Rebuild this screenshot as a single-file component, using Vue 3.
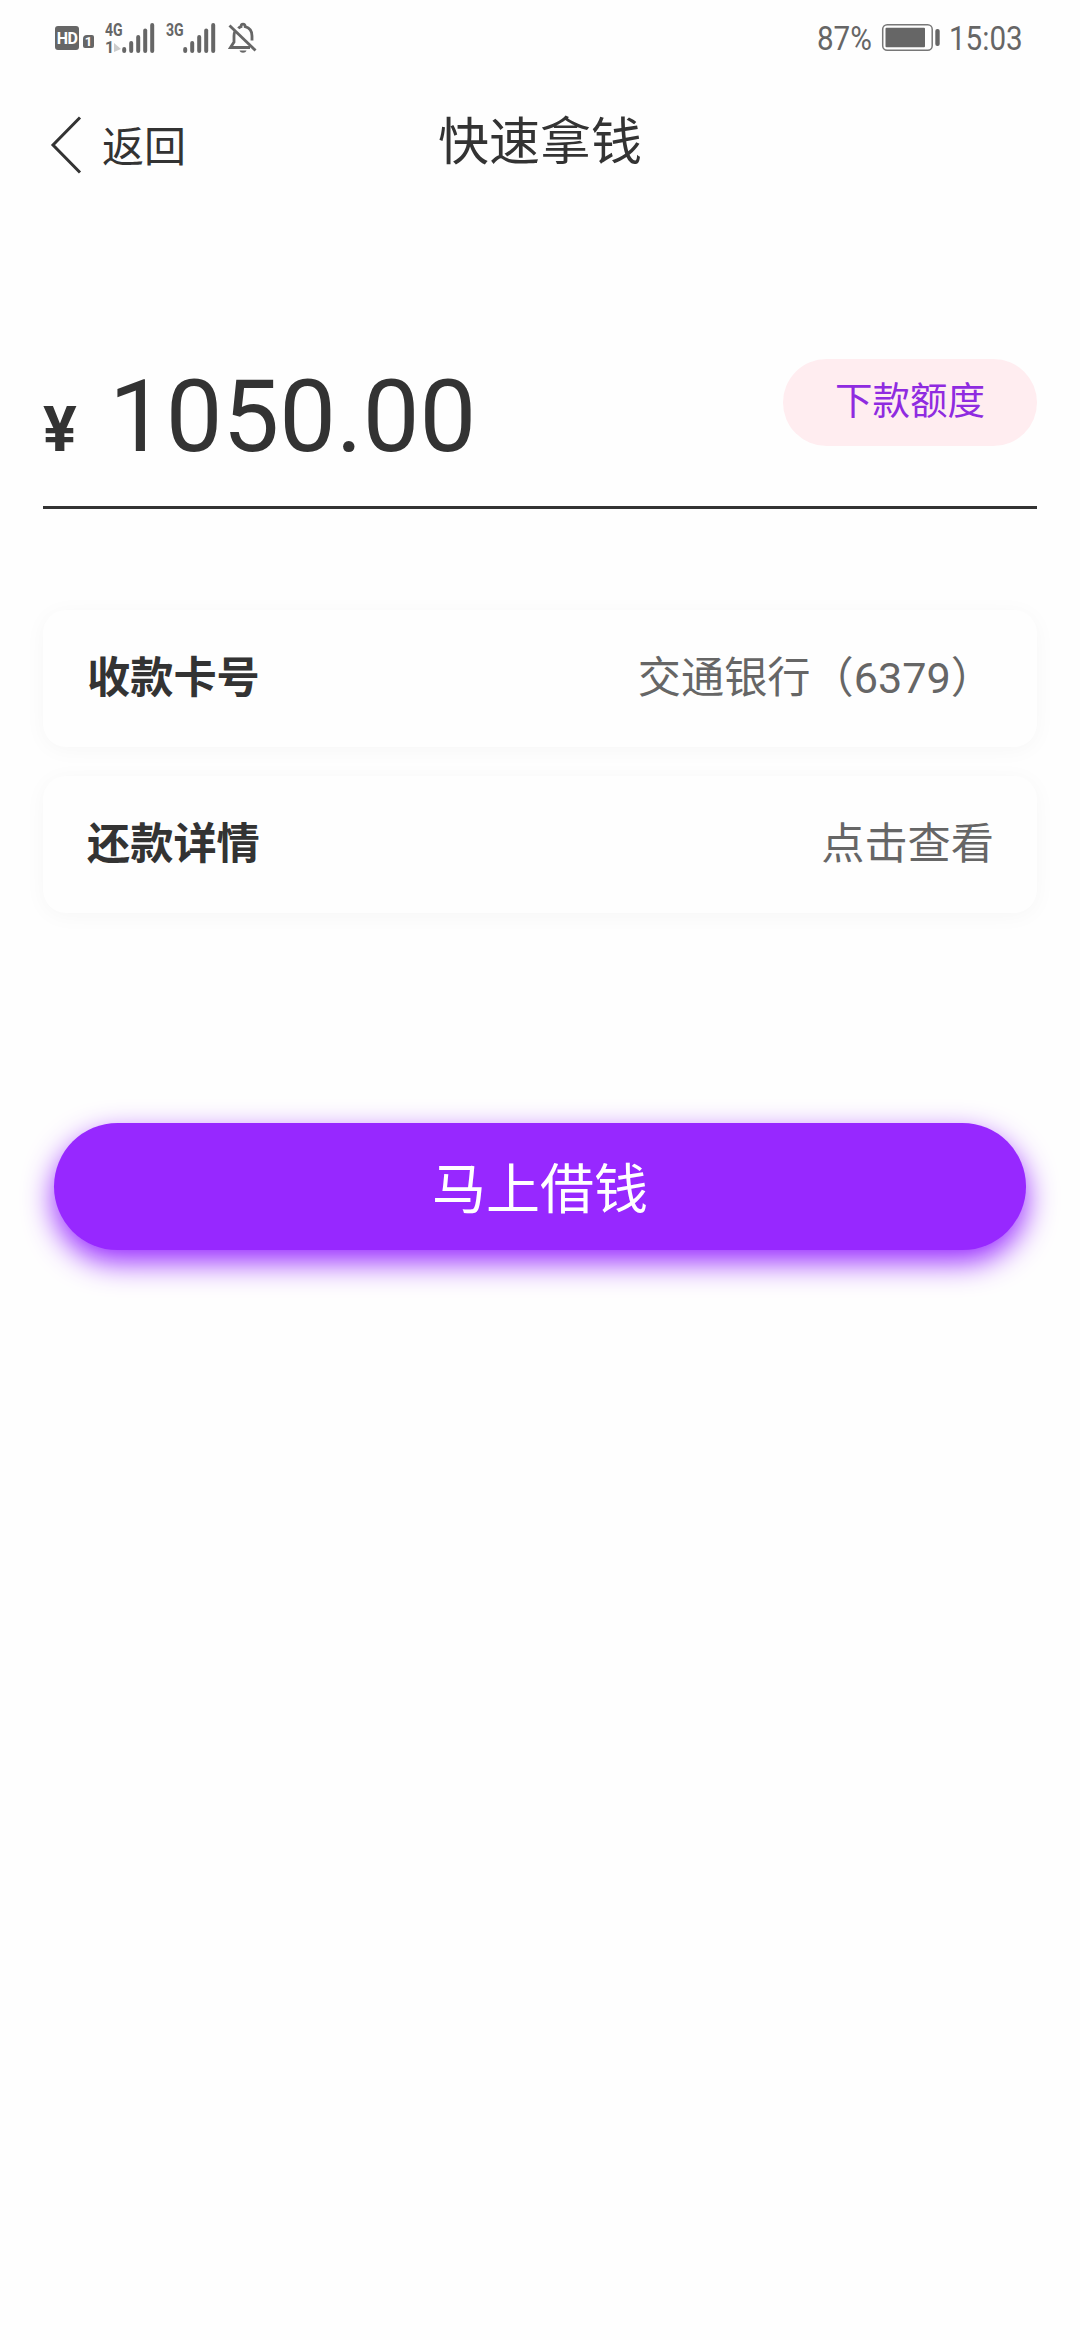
<template>
  <div class="page">
    <div class="status-bar">
      <div class="status-left">
        <span class="hd">HD</span>
        <span class="sim">1</span>
        <div class="network">
          <span class="network-type">4G</span>
          <span class="network-data">1<i class="data-arrow"></i></span>
        </div>
        <svg class="signal" viewBox="0 0 33 31">
          <path v-for="bar in bars" :key="bar.x" :d="`M${bar.x} ${bar.y}V29`" />
        </svg>
        <div class="network second">
          <span class="network-type">3G</span>
        </div>
        <svg class="signal" viewBox="0 0 33 31">
          <path v-for="bar in bars" :key="bar.x" :d="`M${bar.x} ${bar.y}V29`" />
        </svg>
        <svg class="bell" viewBox="0 0 30 32">
          <path class="line" d="M10.500 6.500C11 5.500 12 5 13 4.700C13 1.200 17 1.200 17.200 4.700C22 6 24 9.500 24 14V18.500" />
          <path class="line" d="M7 9.500C6 11 6 12 6 14V20L2.500 25.500H22" />
          <path class="line" d="M1.500 3.500L27.500 28.500" />
          <path class="clapper" d="M11.500 28.500H18.500C17.500 31.500 12.500 31.500 11.500 28.500Z" />
        </svg>
      </div>
      <div class="status-right">
        <span class="percent"><b>87%</b></span>
        <svg class="battery" viewBox="0 0 60 29">
          <rect class="shell" x="1.700" y="1.700" width="49.500" height="25.600" rx="4.500" />
          <rect x="4.500" y="4.800" width="39.500" height="19.400" rx="1" />
          <rect x="54.300" y="6" width="4.400" height="17" rx="2" />
        </svg>
        <span class="time"><b>15:03</b></span>
      </div>
    </div>

    <header class="nav">
      <button class="back" @click="goBack">
        <svg class="back-icon" viewBox="0 0 32 58">
          <path d="M30 1.500L3 29L30 56.500" />
        </svg>
        <span class="back-text">返回</span>
      </button>
      <h1 class="title">快速拿钱</h1>
    </header>

    <section class="amount">
      <div class="amount-value">
        <span class="currency">¥</span>
        <span class="number">{{ amount }}</span>
      </div>
      <span class="tag">下款额度</span>
    </section>

    <section class="cards">
      <div v-for="item in items" :key="item.label" class="card">
        <span class="label">{{ item.label }}</span>
        <span class="value">{{ item.value }}</span>
      </div>
    </section>

    <button class="submit">马上借钱</button>
  </div>
</template>

<script setup>
import { ref } from 'vue'

const amount = ref('1050.00')

const items = ref([
  { label: '收款卡号', value: '交通银行（6379）' },
  { label: '还款详情', value: '点击查看' }
])

const bars = [
  { x: 2.2, y: 27 },
  { x: 9.2, y: 21 },
  { x: 16.2, y: 15 },
  { x: 23.2, y: 8.5 },
  { x: 30.2, y: 3 }
]

const goBack = () => {
  window.history.back()
}
</script>

<style>
body {
  background: #fefefe;
}
</style>

<style scoped>
.page {
  width: 1080px;
  height: 2340px;
  overflow: hidden;
  background: #fefefe;
  color: #333;
  font-family: Roboto, "Noto Sans CJK SC", sans-serif;
}

button {
  border: none;
  padding: 0;
  background: none;
  font-family: inherit;
  cursor: pointer;
}

.status-bar {
  height: 75px;
  box-sizing: border-box;
  padding: 0 56px 0 55px;
  display: flex;
  justify-content: space-between;
  align-items: center;
  color: #666;
}

.status-left {
  display: flex;
  align-items: center;
}

.hd {
  width: 24px;
  height: 24px;
  border-radius: 3px;
  background: #666;
  color: #fff;
  font-size: 16px;
  font-weight: 700;
  line-height: 25px;
  letter-spacing: -0.5px;
  text-align: center;
}

.sim {
  width: 11px;
  height: 13px;
  margin: 7px 11px 0 4px;
  border-radius: 4px 2px 2px 2px;
  background: #666;
  color: #fff;
  font-size: 13px;
  font-weight: 700;
  line-height: 14px;
  text-align: center;
}

.network {
  width: 17px;
  height: 32px;
  display: flex;
  flex-direction: column;
  justify-content: space-between;
}

.network.second {
  margin-left: 11px;
}

.network-type {
  font-size: 19px;
  font-weight: 700;
  line-height: 15px;
  transform: scaleX(0.74);
  transform-origin: left;
}

.network-data {
  display: flex;
  align-items: center;
  font-size: 16px;
  font-weight: 700;
  line-height: 12px;
}

.data-arrow {
  flex: none;
  border-left: 7px solid #ccc;
  border-top: 6px solid transparent;
  border-bottom: 3px solid transparent;
}

.signal {
  width: 33px;
  height: 31px;
}

.signal path {
  stroke: #666;
  stroke-width: 4;
  stroke-linecap: round;
}

.bell {
  width: 30px;
  height: 32px;
  margin-left: 12px;
}

.bell .line {
  fill: none;
  stroke: #666;
  stroke-width: 2.8;
}

.bell .clapper {
  fill: #666;
}

.status-right {
  display: flex;
  align-items: center;
  font-size: 34px;
  line-height: 40px;
}

.status-right b {
  display: block;
  font-weight: 400;
  transform: scaleX(0.87);
  transform-origin: left;
}

.percent {
  width: 64px;
}

.battery {
  width: 60px;
  height: 29px;
  fill: #666;
}

.battery .shell {
  fill: none;
  stroke: #777;
  stroke-width: 1.5;
}

.time {
  width: 83px;
  padding-left: 8px;
  box-sizing: border-box;
}

.nav {
  height: 140px;
  display: grid;
  grid-template-columns: 1fr auto 1fr;
  align-items: center;
}

.back {
  display: flex;
  align-items: center;
  gap: 20px;
  padding-left: 50px;
  color: #333;
  font-size: 42px;
  line-height: 60px;
}

.back-icon {
  width: 32px;
  height: 58px;
  fill: none;
  stroke: #333;
  stroke-width: 3;
}

.back-text {
  padding-top: 5px;
}

.title {
  margin: 0 0 4px;
  font-size: 51px;
  font-weight: 400;
  line-height: 72px;
}

.amount {
  height: 147px;
  margin: 144px 43px 0;
  display: flex;
  justify-content: space-between;
  align-items: flex-start;
  border-bottom: 3px solid #333;
}

.amount-value {
  display: flex;
  align-items: baseline;
  line-height: 115px;
}

.currency {
  width: 66px;
  font-size: 63px;
  font-weight: 700;
}

.number {
  font-size: 101px;
}

.tag {
  width: 254px;
  height: 87px;
  border-radius: 44px;
  background: #ffedf0;
  color: #8f2be0;
  font-size: 37.5px;
  line-height: 84px;
  text-align: center;
}

.cards {
  margin: 101px 43px 0;
  display: flex;
  flex-direction: column;
  gap: 29px;
}

.card {
  height: 137px;
  box-sizing: border-box;
  padding: 0 43px 0 44px;
  display: flex;
  justify-content: space-between;
  align-items: center;
  border-radius: 23px;
  background: #fefefe;
  box-shadow: 0 3px 22px rgba(0, 0, 0, 0.035);
  font-size: 43.2px;
  line-height: 64px;
}

.label {
  font-weight: 700;
}

.value {
  color: #666;
}

.submit {
  display: block;
  box-sizing: border-box;
  width: 972px;
  height: 127px;
  margin: 210px auto 0;
  padding-top: 9px;
  border-radius: 64px;
  background: #9728ff;
  box-shadow: 0 12px 30px #9728ff;
  color: #fff;
  font-size: 54px;
  line-height: 118px;
}

.submit:active {
  opacity: 0.9;
}
</style>
